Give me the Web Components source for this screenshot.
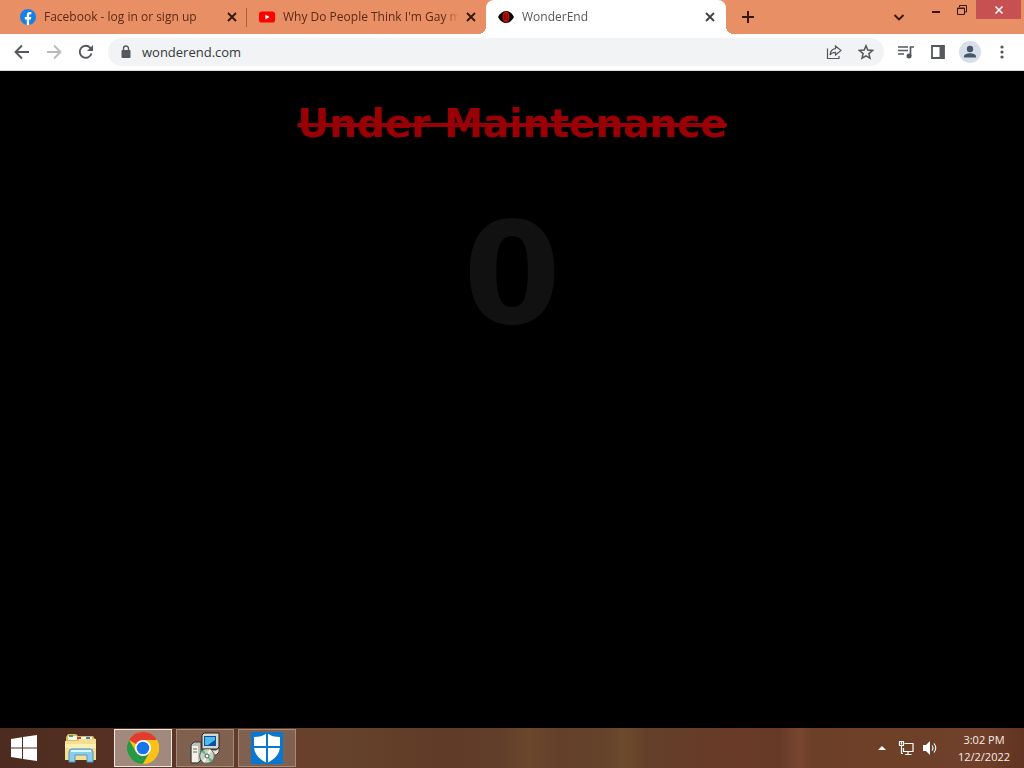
<!DOCTYPE html>
<html lang="en">
<head>
<meta charset="utf-8">
<title>WonderEnd</title>
<style>
html, body { height: 100%; }
body { margin: 0; background: #000; font-family: "Open Sans", "Noto Sans", sans-serif; font-size: 12px; overflow: hidden; }
</style>
</head>
<body>
<desktop-screen></desktop-screen>
<script>
const define = (name, html) => customElements.define(name, class extends HTMLElement {
  constructor() {
    super();
    const t = document.createElement('template');
    t.innerHTML = `<style>
      *{box-sizing:border-box}
      button{border:0;padding:0;margin:0;background:none;font:inherit;color:inherit;display:flex;align-items:center;justify-content:center}
      svg{display:block;flex:none}
    </style>` + html;
    this.attachShadow({ mode: 'open' }).append(t.content);
  }
});

define('browser-tab', `
<style>
:host{display:flex;align-items:center;flex:0 1 239px;min-width:0;height:34px;padding:0 7px 0 12px;color:#5b2a14;position:relative}
:host([active]){flex-basis:240px;padding-right:8px;background:#fff;border-radius:8px 8px 0 0;color:#54585d}
:host([active])::before,:host([active])::after{content:"";position:absolute;bottom:0;width:8px;height:8px}
:host([active])::before{left:-8px;background:radial-gradient(circle at 0 0,transparent 8px,#fff 8px)}
:host([active])::after{right:-8px;background:radial-gradient(circle at 100% 0,transparent 8px,#fff 8px)}
:host([divided]){background:linear-gradient(#a9603f,#a9603f) right center / 1px 19px no-repeat}
.title{flex:1;min-width:0;justify-content:flex-start;gap:8px;height:34px}
.label{flex:1;min-width:0;overflow:hidden;white-space:nowrap;text-align:left;line-height:18px;-webkit-mask:linear-gradient(to left,transparent,#000 16px);mask:linear-gradient(to left,transparent,#000 16px)}
.close{width:16px;height:16px;margin-left:4px;color:#35170c}
:host([active]) .close{color:#3c4043}
</style>
<button class="title" role="tab"><slot name="icon"></slot><span class="label"><slot></slot></span></button>
<button class="close" aria-label="Close tab"><svg width="16" height="16" viewBox="0 0 16 16"><path d="M4 4l8 8M12 4l-8 8" stroke="currentColor" stroke-width="1.8"/></svg></button>`);

define('tab-strip', `
<style>
:host{display:flex;height:34px;padding-left:8px;background:#e88f66}
.new{width:28px;height:34px;margin-left:8px;color:#35170c}
.list{width:24px;height:34px;margin-left:auto;color:#35170c}
.caption{display:flex;align-items:flex-start;margin-left:12px;color:#35170c}
.caption button{width:26px;height:19px}
.caption .exit{width:45px;background:#c75050;color:#fff;margin-right:3px;margin-left:1px}
</style>
<browser-tab divided><svg slot="icon" width="16" height="16" viewBox="0 0 16 16"><circle cx="8" cy="8" r="8" fill="#1580e8"/><path d="M6.8 16v-5.6h-2V8h2V6.3c0-2.1 1.2-3.2 3-3.2.9 0 1.6.1 1.6.1v2h-1c-1 0-1.3.6-1.3 1.2V8h2.2l-.4 2.4H9.1V16z" fill="#fff"/></svg>Facebook - log in or sign up</browser-tab>
<browser-tab><svg slot="icon" width="16" height="16" viewBox="0 0 16 16"><rect y="2.5" width="16" height="11" rx="2.6" fill="#f00"/><path d="M6.4 5.6v4.8l4.1-2.4z" fill="#fff"/></svg>Why Do People Think I'm Gay m</browser-tab>
<browser-tab active><svg slot="icon" width="16" height="16" viewBox="0 0 16 16"><path d="M0 8C2 4.500 4.500 2 8 2s6 2.500 8 6c-2 3.500-4.500 6-8 6S2 11.500 0 8z" fill="#0a0000"/><ellipse cx="8" cy="8" rx="3.500" ry="5.800" fill="#b80d0d"/><path d="M7 5v6M9.300 5v6" stroke="#500" stroke-width=".8"/></svg>WonderEnd</browser-tab>
<button class="new" aria-label="New tab"><svg width="14" height="14" viewBox="0 0 14 14"><path d="M7 1v12M1 7h12" stroke="currentColor" stroke-width="2"/></svg></button>
<button class="list" aria-label="Search tabs"><svg width="12" height="12" viewBox="0 0 12 12"><path d="M1.500 4L6 8.500 10.500 4" fill="none" stroke="currentColor" stroke-width="1.900"/></svg></button>
<div class="caption">
<button aria-label="Minimize"><svg width="10" height="10" viewBox="0 0 10 10"><path d="M1 7h8" stroke="currentColor" stroke-width="2"/></svg></button>
<button aria-label="Restore"><svg width="10" height="10" viewBox="0 0 10 10"><path d="M.5 3v6.500h7V3zM0 3.500h8M2.500 2V.5h7v6.500H8" fill="none" stroke="currentColor"/></svg></button>
<button class="exit" aria-label="Close"><svg width="10" height="10" viewBox="0 0 10 10"><path d="M1.500 1.500l7 7M8.500 1.500l-7 7" stroke="currentColor" stroke-width="1.600"/></svg></button>
</div>`);

define('address-bar', `
<style>
:host{display:flex;align-items:center;height:37px;padding:0 6px;background:#fff;color:#54585d;border-bottom:1px solid #d8dadc}
.nav{width:32px;height:32px}
.off{color:#b8babd}
.box{display:flex;align-items:center;flex:1;min-width:0;height:28px;margin:0 6px;padding:0 2px 0 10px;border-radius:14px;background:#f1f3f4}
input{flex:1;min-width:0;height:24px;border:0;padding:0;margin-left:8px;background:none;outline:0;font:inherit;font-size:13px;color:#35383c}
.face{width:22px;height:22px;border-radius:50%;background:#d9dfe8}
</style>
<button class="nav" aria-label="Back"><svg width="16" height="16" viewBox="0 0 16 16"><path d="M15 8H2M8 1.500L1.500 8 8 14.500" fill="none" stroke="currentColor" stroke-width="1.900"/></svg></button>
<button class="nav off" aria-label="Forward"><svg width="16" height="16" viewBox="0 0 16 16"><path d="M1 8h13M8 1.500L14.500 8 8 14.500" fill="none" stroke="currentColor" stroke-width="1.900"/></svg></button>
<button class="nav" aria-label="Reload"><svg width="16" height="16" viewBox="0 0 16 16"><path d="M13.500 9.500A6 6 0 1 1 12.300 3.800L14 5.500" fill="none" stroke="currentColor" stroke-width="1.900"/><path d="M15 1v6H9z" fill="currentColor"/></svg></button>
<div class="box">
<svg width="16" height="16" viewBox="0 0 16 16"><rect x="3.500" y="6" width="9" height="8" rx="1" fill="currentColor"/><path d="M5.500 6.500V4.500a2.500 2.500 0 0 1 5 0v2" fill="none" stroke="currentColor" stroke-width="1.400"/></svg>
<input aria-label="Address" value="wonderend.com">
<button class="nav" aria-label="Share"><svg width="16" height="16" viewBox="0 0 16 16"><path d="M1.500 4.500v10H13V12M9.500 2l5.500 4.500L9.500 11V8.300C6.500 8.300 5 9.500 4 11c.3-3.500 2.300-6 5.500-6.400z" fill="none" stroke="currentColor" stroke-width="1.200"/></svg></button>
<button class="nav" aria-label="Bookmark"><svg width="16" height="16" viewBox="0 0 16 16"><path d="M8 1.800l1.800 4.300 4.700.4-3.600 3.100 1.100 4.600L8 11.800l-4 2.400 1.100-4.600L1.500 6.500l4.700-.4z" fill="none" stroke="currentColor" stroke-width="1.500"/></svg></button>
</div>
<button class="nav" aria-label="Media"><svg width="18" height="16" viewBox="0 0 18 16"><path d="M1 3h10M1 6.500h10M1 10h6M13.500 12V3H17" fill="none" stroke="currentColor" stroke-width="1.700"/><circle cx="12" cy="12" r="2.500" fill="currentColor"/></svg></button>
<button class="nav" aria-label="Side panel"><svg width="14" height="14" viewBox="0 0 14 14"><path d="M1 1h12v12H1z" fill="none" stroke="currentColor" stroke-width="1.800"/><path d="M8.500 1H13v12H8.500z" fill="currentColor"/></svg></button>
<button class="nav" aria-label="Profile"><span class="face"><svg width="22" height="22" viewBox="0 0 22 22"><circle cx="11" cy="8" r="3.200" fill="#46566b"/><path d="M5 16.500v-1.300c0-2 3.500-3 6-3s6 1 6 3v1.300z" fill="#46566b"/></svg></span></button>
<button class="nav" aria-label="Menu"><svg width="4" height="14" viewBox="0 0 4 14"><g fill="currentColor"><circle cx="2" cy="2" r="1.600"/><circle cx="2" cy="7" r="1.600"/><circle cx="2" cy="12" r="1.600"/></g></svg></button>`);

define('site-page', `
<style>
:host{display:block;flex:1;min-height:0;overflow:hidden;background:#000;text-align:center;padding-top:24px;font-family:"DejaVu Sans",sans-serif;font-weight:700}
h1{margin:0;font-size:39px;line-height:58px;color:#980005}
h1 s{text-decoration-thickness:4px}
p{margin:41px 0 0;font-size:141px;line-height:160px;color:#111}
</style>
<h1><s>Under Maintenance</s></h1>
<p>0</p>`);

define('task-button', `
<style>
:host{display:block}
button{width:58px;height:38px;border:1px solid transparent}
:host([running]) button{background:#80604f;border-color:#a58b7d}
:host([active]) button{background:#a08a7e;border-color:#f3e6de}
</style>
<button><slot></slot></button>`);

define('task-bar', `
<style>
:host{display:flex;align-items:center;height:40px;gap:4px;color:#f8eee8;
background:linear-gradient(90deg,#4d2b20 0,#553023 110px,#6a402d 300px,#65422b 345px,#603b28 440px,#613e29 500px,#6b472c 530px,#643f2a 560px,#65442b 610px,#6d4a2c 622px,#643f29 650px,#683a27 740px,#663a27 780px,#794730 800px,#6c3f28 812px,#6e4028 900px,#70402a 980px,#603422 100%)}
.start{width:48px;height:38px}
.tray{display:flex;align-items:center;margin-left:auto}
.tray button{width:24px;height:32px}
.tray .sound{margin-right:2px}
time{width:80px;text-align:center;line-height:17px;font-size:11px}
</style>
<button class="start" aria-label="Start"><svg width="26" height="26" viewBox="0 0 26 26"><path d="M0 4l11-1.700v10.200H0zM12 2.100L26 0v12.500H12zM0 13.500h11v10.200L0 22zM12 13.500h14V26l-14-2.100z" fill="#fff"/></svg></button>
<task-button title="File Explorer"><svg width="34" height="32" viewBox="0 0 34 32"><path d="M2 5l2-3h8l2 2h15l2 3v21H2z" fill="#d9b965"/><path d="M4 4h9v4H4zM15 5h13v5H15z" fill="#fffbea"/><path d="M5 3h4v2H5z" fill="#51a352"/><path d="M13 5h4v2h-4z" fill="#cc4033"/><path d="M22 5h4v2h-4z" fill="#3d86bd"/><path d="M1 9h13l3-2h15v21H1z" fill="#f4df91"/><path d="M1 12h31v4H1z" fill="#fbefb7"/><path d="M5 30V20q0-3 3-3h18q3 0 3 3v10h-6v-7H11v7z" fill="#8ccbe9" stroke="#4b9bc8"/><path d="M7 19h20" stroke="#dcf5ff" stroke-width="2"/></svg></task-button>
<task-button active title="Google Chrome"><svg width="32" height="32" viewBox="0 0 32 32"><circle cx="16" cy="16" r="16" fill="#fbc116"/><path d="M16 16L2.140 8A16 16 0 0 1 29.860 8H16z" fill="#e33b2e"/><path d="M2.140 8A16 16 0 0 0 16 32l6.930-12L16 16 9.100 20z" fill="#279847"/><path d="M29.860 8H16l6.930 12L16 32A16 16 0 0 0 29.860 8z" fill="#fbc116"/><circle cx="16" cy="16" r="8" fill="#fff"/><circle cx="16" cy="16" r="6.300" fill="#1a73e8"/></svg></task-button>
<task-button running title="Installer"><svg width="32" height="32" viewBox="0 0 32 32"><path d="M2 13l3-3h7v18l-3 3H2z" fill="#bfc0b8" stroke="#343434"/><path d="M3 14h6v16H3z" fill="#f2f2e8"/><path d="M4 17h4M4 20h4" stroke="#666"/><path d="M13 3l2-2h15v14l-2 2H13z" fill="#d7d7cc" stroke="#222"/><path d="M15 4h12v10H15z" fill="#0754a5"/><path d="M16 5h10v3L19 13h-3z" fill="#52b9ed"/><path d="M13 18h14l3-2v4l-3 3H13z" fill="#e5e3d4" stroke="#444"/><circle cx="18" cy="24" r="7.300" fill="#c6d3c8" stroke="#56645d"/><path d="M18 24l-6-4 3-2zM18 24l6 4-3 2z" fill="#65b984"/><path d="M18 24l2-7 3 2zM18 24l-2 7-3-2z" fill="#f2f5dc"/><circle cx="18" cy="24" r="2" fill="#fff" stroke="#555"/></svg></task-button>
<task-button running title="Windows Defender"><svg width="32" height="32" viewBox="0 0 32 32"><path d="M0 0h32v32H0z" fill="#0877d2"/><path d="M16 1c4 3 8 4 13 4v9c0 8-5 13-13 17C8 27 3 22 3 14V5c5 0 9-1 13-4z" fill="#fff"/><path d="M16 1v30M2 15h28" stroke="#0877d2" stroke-width="2"/></svg></task-button>
<div class="tray">
<button aria-label="Show hidden icons"><svg width="8" height="4" viewBox="0 0 8 4"><path d="M4 0l4 4H0z" fill="#fff"/></svg></button>
<button aria-label="Network"><svg width="16" height="16" viewBox="0 0 16 16"><path d="M6.500 3.500H15v8H5.500V8M10 12v2M7 14.500h6.500M1.500 1.500h4v4h-4zM3.500 1.500v3M3.500 6v7.500H5" fill="none" stroke="#fff" stroke-width="1.200"/></svg></button>
<button class="sound" aria-label="Volume"><svg width="16" height="16" viewBox="0 0 16 16"><path d="M1 5h3l4-4v14l-4-4H1z" fill="#fff"/><path d="M10 5.500q2 2.500 0 5M12 3.500q3.500 4.500 0 9" fill="none" stroke="#fff" stroke-width="1.100"/></svg></button>
<time datetime="2022-12-02T15:02">3:02 PM<br>12/2/2022</time>
</div>`);

define('desktop-screen', `
<style>:host{display:flex;flex-direction:column;height:100vh}tab-strip,address-bar,task-bar{flex:none}</style>
<tab-strip></tab-strip><address-bar></address-bar><site-page></site-page><task-bar></task-bar>`);
</script>
</body>
</html>
